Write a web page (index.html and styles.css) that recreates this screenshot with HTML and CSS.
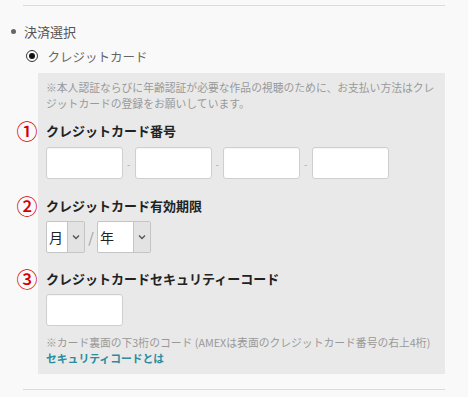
FILE: index.html
```html
<!DOCTYPE html>
<html lang="ja">
<head>
<meta charset="utf-8">
<link rel="stylesheet" href="styles.css">
</head>
<body>
<div class="wrap">
  <div class="rule"></div>
  <div class="section-title"><span class="dot"></span>決済選択</div>
  <div class="radio-row"><span class="radio"><span class="radio-in"></span></span>クレジットカード</div>
  <div class="panel">
    <p class="note">※本人認証ならびに年齢認証が必要な作品の視聴のために、お支払い方法はクレジットカードの登録をお願いしています。</p>

    <div class="heading h1"><span class="num">①</span>クレジットカード番号</div>
    <div class="card-row">
      <div class="input w77"></div><span class="dash">-</span>
      <div class="input w77"></div><span class="dash">-</span>
      <div class="input w77"></div><span class="dash">-</span>
      <div class="input w77"></div>
    </div>

    <div class="heading h2"><span class="num">②</span>クレジットカード有効期限</div>
    <div class="exp-row">
      <div class="select sel-m"><span class="sel-text">月</span><span class="sel-arrow"><svg width="8" height="6" viewBox="0 0 8 6"><path d="M1 1.5 L4 4.5 L7 1.5" fill="none" stroke="#555" stroke-width="1.4"/></svg></span></div>
      <span class="slash">/</span>
      <div class="select sel-y"><span class="sel-text">年</span><span class="sel-arrow"><svg width="8" height="6" viewBox="0 0 8 6"><path d="M1 1.5 L4 4.5 L7 1.5" fill="none" stroke="#555" stroke-width="1.4"/></svg></span></div>
    </div>

    <div class="heading h3"><span class="num">③</span>クレジットカードセキュリティーコード</div>
    <div class="input w77 sec"></div>
    <p class="note note2">※カード裏面の下3桁のコード (AMEXは表面のクレジットカード番号の右上4桁)</p>
    <a class="link" href="#">セキュリティコードとは</a>
  </div>
  <div class="rule rule-bottom"></div>
</div>
</body>
</html>
```
FILE: styles.css
```css
html, body {
  margin: 0;
  padding: 0;
  background: #f9f9f9;
  font-family: "Noto Sans CJK JP", "Noto Sans", sans-serif;
}
.wrap {
  margin-left: 23px;
  width: 422px;
}
.rule {
  height: 1px;
  background: #dcdcdc;
  margin-top: 5px;
}
.rule-bottom {
  margin-top: 15px;
}
.section-title {
  display: flex;
  align-items: center;
  margin-top: 15px;
  height: 20px;
  font-size: 13px;
  color: #555;
  margin-left: 1px;
}
.dot {
  width: 5px;
  height: 5px;
  border-radius: 50%;
  background: #666;
  margin-left: -13px;
  margin-right: 8px;
}
.radio-row {
  display: flex;
  align-items: center;
  margin-top: 5px;
  height: 20px;
  font-size: 12.5px;
  color: #666;
}
.radio {
  width: 10px;
  height: 10px;
  border: 1.5px solid #333;
  border-radius: 50%;
  margin-left: 2.5px;
  margin-right: 10px;
  display: flex;
  align-items: center;
  justify-content: center;
  background: #fff;
}
.radio-in {
  width: 6px;
  height: 6px;
  border-radius: 50%;
  background: #111;
}
.panel {
  margin-left: 15px;
  margin-top: 7px;
  background: #e9e9e9;
  padding: 6px 8px 8px 8px;
}
.note {
  margin: 0;
  font-size: 10.8px;
  line-height: 16px;
  color: #999;
}
.heading {
  display: flex;
  align-items: center;
  height: 20px;
  font-size: 13px;
  font-weight: bold;
  color: #222;
  margin-left: -30px;
}
.h1 { margin-top: 9px; }
.h2 { margin-top: 16px; }
.h3 { margin-top: 15px; }
.num {
  width: 22px;
  margin-right: 8px;
  text-align: center;
  font-size: 21px;
  font-weight: 500;
  color: #d40000;
  line-height: 20px;
}
.card-row {
  display: flex;
  align-items: center;
  margin-top: 7px;
}
.input {
  height: 30px;
  background: #fff;
  border: 1px solid #cfcfcf;
  border-radius: 3px;
  box-shadow: inset 0 1px 1px rgba(0,0,0,0.04);
}
.w77 { width: 75px; }
.dash {
  width: 11.5px;
  text-align: center;
  font-size: 10px;
  color: #aaa;
}
.exp-row {
  display: flex;
  align-items: center;
  margin-top: 6px;
}
.select {
  display: flex;
  height: 30px;
  background: #fff;
  border: 1px solid #c4c4c4;
  border-radius: 2px;
  box-sizing: content-box;
}
.sel-m { width: 37px; }
.sel-y { width: 52px; }
.sel-text {
  flex: 1;
  display: flex;
  align-items: center;
  padding-left: 2px;
  font-size: 14px;
  color: #222;
}
.sel-arrow {
  width: 16px;
  display: flex;
  align-items: center;
  justify-content: center;
  background: #e3e3e3;
  border-left: 1px solid #c4c4c4;
}
.slash {
  width: 12px;
  text-align: center;
  font-size: 14px;
  color: #999;
}
.sec {
  margin-top: 6px;
}
.note2 {
  margin-top: 8px;
}
.link {
  display: block;
  font-size: 10.8px;
  line-height: 16px;
  font-weight: bold;
  color: #2a8c9c;
  text-decoration: none;
}
```
